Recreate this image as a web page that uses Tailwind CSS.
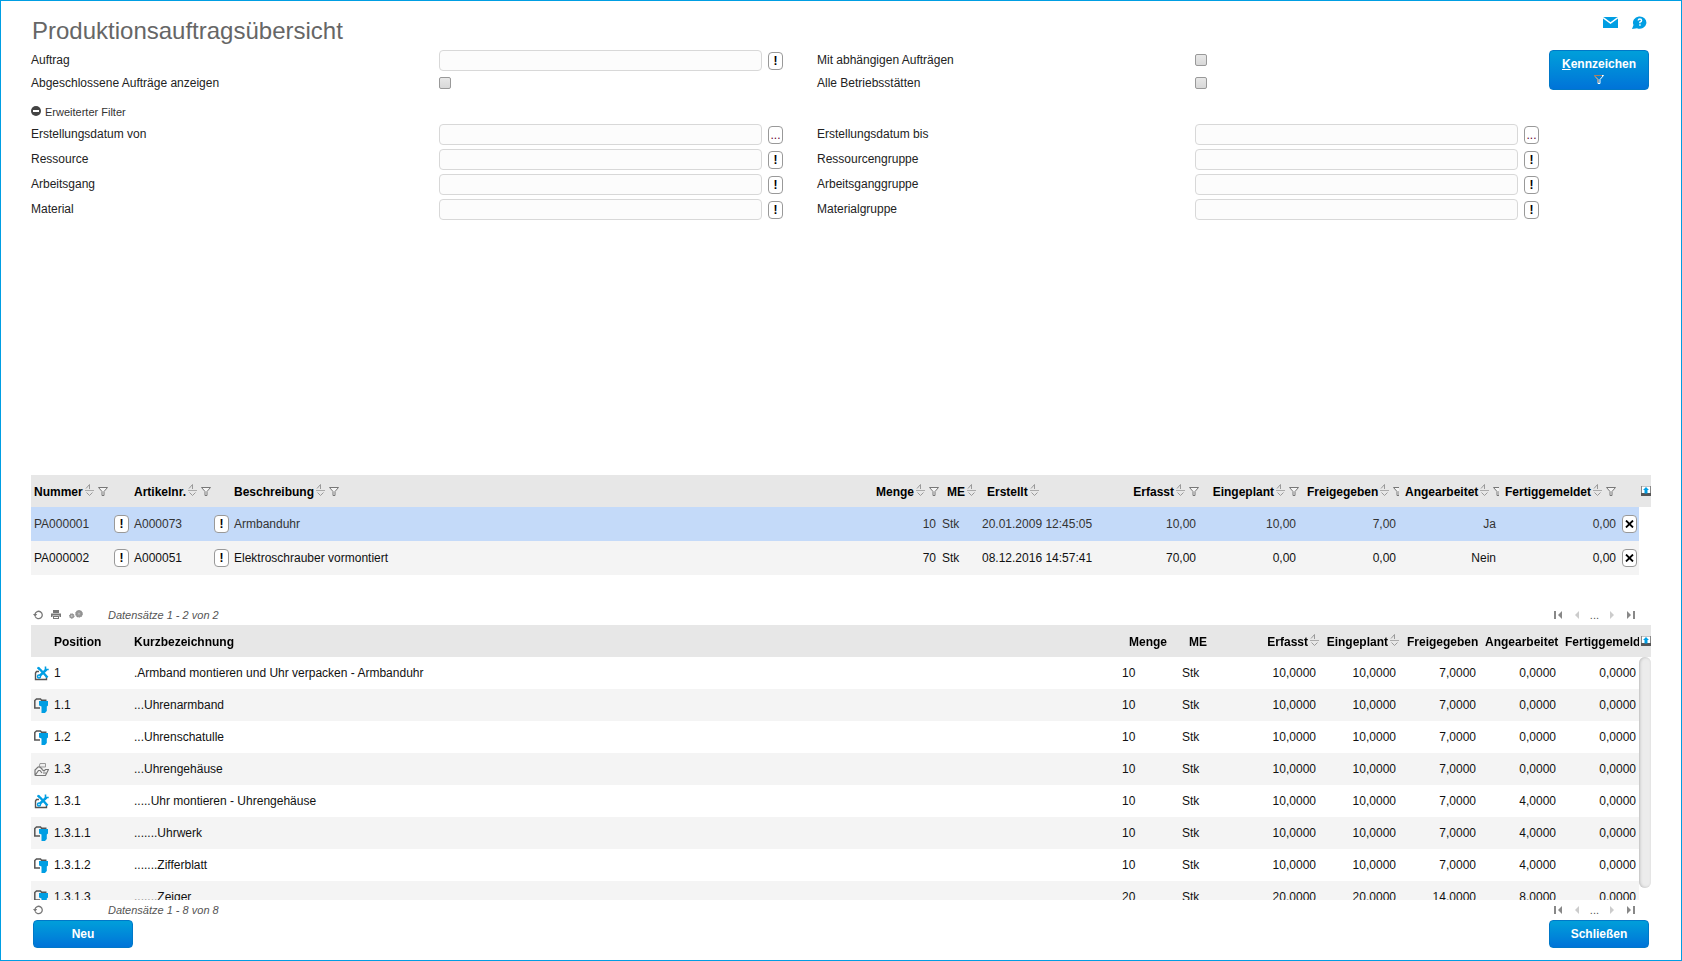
<!DOCTYPE html>
<html lang="de">
  <head>
    <meta charset="UTF-8" />
    <meta name="viewport" content="width=device-width, initial-scale=1.0" />
    <title>Produktionsauftragsübersicht</title>
    <script src="https://cdn.jsdelivr.net/npm/@tailwindcss/browser@4"></script>
  </head>
  <body class="font-['Liberation_Sans',Arial,sans-serif] text-[12px] leading-4 text-[#222] bg-white">
    <!-- icon set -->
    <svg class="hidden">
      <symbol id="sort" viewBox="0 0 9 12">
        <path d="M0 6.500h9" stroke="#aaa" />
        <path d="M1 4.500 4.500 .5V5M1.500 8.500 4.500 11.500 7.500 8.500" fill="none" stroke="#999" />
      </symbol>
      <symbol id="funnel" viewBox="0 0 10 9">
        <path d="M.5.5h9L6 4.500V8.500H4V4.500z" fill="#f4f4f4" stroke="#777" />
      </symbol>
      <symbol id="export" viewBox="0 0 10 11">
        <path d="M.5 0h9v8h-9z" fill="#fff" stroke="#888" />
        <path d="M0 7h10v3H0z" fill="#555" />
        <path d="M5 1 8 4H6.500V7.500h-3V4H2z" fill="#009ee3" />
      </symbol>
      <symbol id="refresh" viewBox="0 0 10 10">
        <path d="M2.200 6.500A3.700 3.700 0 1 0 2 4" fill="none" stroke="#777" stroke-width="1.300" />
        <path d="M0 4h4.200L2.100 6.800z" fill="#777" />
      </symbol>
      <symbol id="printer" viewBox="0 0 10 9">
        <path d="M2 0h6v3H2zM0 3.500h10V7H8.500V5.500h-7V7H0zM2 6h6v3H2z" fill="#777" />
        <path d="M3 7h4v1H3z" fill="#fff" />
      </symbol>
      <symbol id="gears" viewBox="0 0 14 9">
        <circle cx="2.800" cy="6" r="2.300" fill="#999" stroke="#888" stroke-dasharray="1 .6" />
        <circle cx="10" cy="3.800" r="3.200" fill="#999" stroke="#888" stroke-width="1.200" stroke-dasharray="1.400 .6" />
        <circle cx="2.800" cy="6" r=".8" fill="#ddd" />
        <circle cx="10" cy="3.800" r="1" fill="#bbb" />
      </symbol>
      <symbol id="cross" viewBox="0 0 9 8">
        <path d="M1 .5 8 7.500M8 .5 1 7.500" stroke="#000" stroke-width="1.800" />
      </symbol>
      <symbol id="montage" viewBox="0 0 15 15">
        <path d="M5 5.500H2.500L1.500 7v6.500h11V10" fill="none" stroke="#555" stroke-width="1.400" />
        <path d="M4 1.500 9.500 7l4 4.500M12.500 3.500 6 9.500" stroke="#009ee3" stroke-width="2.400" fill="none" />
        <path d="M3.500 1.500 5.500 3M11.500 .5v3h3.200" fill="none" stroke="#009ee3" stroke-width="1.600" />
        <circle cx="5" cy="10.500" r="1.500" fill="#fff" stroke="#009ee3" stroke-width="1.500" />
      </symbol>
      <symbol id="material" viewBox="0 0 15 15">
        <path d="M6 10H.8V2.500L2.500 1h4l1 1.200h5" fill="none" stroke="#555" stroke-width="1.500" />
        <path d="M5 3h9v4.500L12.800 8.500V13L11 15H7.500V8.500L5 7.500z" fill="#009ee3" />
      </symbol>
      <symbol id="baugruppe" viewBox="0 0 15 15">
        <path d="M6 1.500h5.500v3.500H5z" fill="#eee" stroke="#999" />
        <path d="M1 13.500V8l3-3h2l2.500 2.500M1 13.500 4.500 8.500H6l2 2.500M1 13.500h10.500L14.500 7.500h-3L10 9 8 7.500" fill="none" stroke="#777" stroke-width="1.200" />
        <path d="M9 11h3" stroke="#777" />
      </symbol>
      <symbol id="first" viewBox="0 0 9 8">
        <path d="M0 0h2v8H0zM8 0v8L4 4z" />
      </symbol>
      <symbol id="prev" viewBox="0 0 9 8">
        <path d="M7 0v8L3 4z" />
      </symbol>
    </svg>

    <div class="h-screen flex flex-col border border-[#009ee3] px-[30px] pt-[11px] pb-3">
      <header class="flex justify-between items-start">
        <h1 class="pl-px text-[24px] leading-[38px] text-[#666]">Produktionsauftragsübersicht</h1>
        <nav class="flex gap-[14px] pt-1 pr-1">
          <a href="#" aria-label="Nachricht">
            <svg class="w-[15px] h-[13px]" viewBox="0 0 15 13">
              <path d="M0 1h15v11H0z" fill="#009ee3" />
              <path d="M0 1.500l7.500 5.500L15 1.500" fill="none" stroke="#fff" stroke-width="1.500" />
            </svg>
          </a>
          <a href="#" aria-label="Hilfe">
            <svg class="w-[15px] h-[13px]" viewBox="0 0 15 13">
              <path d="M0 13 1.500 9A6.700 6.200 0 1 1 5 12.300z" fill="#009ee3" />
              <path d="M6.200 4.500q0-1.500 1.700-1.500t1.700 1.400Q9.600 5.500 7.900 6.200v1" fill="none" stroke="#fff" stroke-width="1.400" />
              <path d="M7.200 8.200h1.500v1.500H7.200z" fill="#fff" />
            </svg>
          </a>
        </nav>
      </header>

      <main class="flex-1 min-h-0 flex flex-col">
        <section class="flex-1 min-h-0 flex items-start gap-[10px] pr-0.5">
          <form class="flex-1">
            <div class="filter grid grid-cols-[408fr_344fr_412fr_344fr] auto-rows-[21px] gap-y-0.5 items-start"></div>
            <button type="button" class="mt-2 mb-0.5 h-5 flex items-center gap-1 text-[11px] text-[#333]">
              <svg class="w-[10px] h-[10px] mb-0.5" viewBox="0 0 10 10">
                <circle cx="5" cy="5" r="5" fill="#444" />
                <path d="M2 4h6v2H2z" fill="#fff" />
              </svg>
              Erweiterter Filter
            </button>
            <div class="filter grid grid-cols-[408fr_344fr_412fr_344fr] auto-rows-[21px] gap-y-1 items-start"></div>
          </form>
          <button class="w-[100px] h-10 rounded border border-[#0078c8] bg-linear-to-b from-[#009fda] to-[#0073d8] text-white font-bold flex flex-col items-center justify-center">
            <span class="leading-[14px]"><u>K</u>ennzeichen</span>
            <svg class="w-[10px] h-[9px] mt-1" viewBox="0 0 10 9">
              <path d="M.5.500h9L6 4.500V8.500H4V4.500z" fill="none" stroke="#fff" />
              <path d="M0 .5h8M1 1l3 3.500v3" stroke="#a87f5f" fill="none" />
            </svg>
          </button>
        </section>

        <table class="w-full table-fixed">
          <colgroup>
            <col class="w-[100px]" />
            <col class="w-[100px]" />
            <col />
            <col class="w-[70px]" />
            <col class="w-[40px]" />
            <col class="w-[140px]" />
            <col class="w-[80px]" />
            <col class="w-[100px]" />
            <col class="w-[100px]" />
            <col class="w-[100px]" />
            <col class="w-[120px]" />
            <col class="w-[20px]" />
            <col class="w-[12px]" />
          </colgroup>
          <thead>
            <tr id="orderHead" class="h-8 bg-[#e7e7e7] text-black text-left whitespace-nowrap"></tr>
          </thead>
          <tbody id="orders"></tbody>
        </table>
        <div class="pager mt-[29px] h-[21px] flex items-center justify-between" data-info="Datensätze 1 - 2 von 2" data-tools="all"></div>

        <div class="relative">
          <div class="h-[275px] overflow-y-auto [scrollbar-width:none]">
            <table class="w-full table-fixed">
              <colgroup>
                <col class="w-[20px]" />
                <col class="w-[80px]" />
                <col />
                <col class="w-[60px]" />
                <col class="w-[60px]" />
                <col class="w-[80px]" />
                <col class="w-[80px]" />
                <col class="w-[80px]" />
                <col class="w-[80px]" />
                <col class="w-[80px]" />
                <col class="w-[12px]" />
              </colgroup>
              <thead class="sticky top-0">
                <tr id="posHead" class="h-8 bg-[#e7e7e7] text-black text-left whitespace-nowrap"></tr>
              </thead>
              <tbody id="positions"></tbody>
            </table>
          </div>
          <!-- scroll thumb -->
          <div class="absolute right-0 top-8 bottom-3 w-3 rounded-full bg-[#ececec] shadow-[inset_1px_0_3px_#bbb]"></div>
        </div>
        <div class="pager h-5 flex items-center justify-between" data-info="Datensätze 1 - 8 von 8"></div>
      </main>

      <footer class="flex justify-between px-0.5">
        <button class="w-[100px] h-7 rounded border border-[#0078c8] bg-linear-to-b from-[#009fda] to-[#0073d8] text-white font-bold">Neu</button>
        <button class="w-[100px] h-7 rounded border border-[#0078c8] bg-linear-to-b from-[#009fda] to-[#0073d8] text-white font-bold">Schließen</button>
      </footer>
    </div>

    <script>
      const sort = `<svg class="inline-block w-[9px] h-3 ml-0.5 mb-1"><use href="#sort" /></svg>`;
      const funnel = `<svg class="inline-block w-[10px] h-[9px] ml-1 mb-0.5"><use href="#funnel" /></svg>`;
      const exportIcon = `<svg class="block w-[10px] h-[11px] ml-0.5 mb-0.5"><use href="#export" /></svg>`;

      function smallButton(text, label) {
        return `<button type="button" aria-label="${label}" class="w-[15px] h-[18px] shrink-0 flex items-center justify-center rounded border border-[#999] bg-white text-[12px] leading-3 font-bold text-black">${text}</button>`;
      }

      // filter fields: [label, kind]
      const filters = [
        [
          ["Auftrag", "!"],
          ["Mit abhängigen Aufträgen", "check"],
          ["Abgeschlossene Aufträge anzeigen", "check"],
          ["Alle Betriebsstätten", "check"],
        ],
        [
          ["Erstellungsdatum von", "..."],
          ["Erstellungsdatum bis", "..."],
          ["Ressource", "!"],
          ["Ressourcengruppe", "!"],
          ["Arbeitsgang", "!"],
          ["Arbeitsganggruppe", "!"],
          ["Material", "!"],
          ["Materialgruppe", "!"],
        ],
      ];

      document.querySelectorAll(".filter").forEach((el, n) => {
        el.innerHTML = filters[n]
          .map(([label, kind], i) => {
            const id = `f${n}${i}`;
            const field =
              kind == "check"
                ? `<input id="${id}" type="checkbox" class="block appearance-none w-3 h-3 mt-1 rounded-xs border border-[#999] bg-linear-to-b from-[#e8e8e8] to-[#d8d8d8]" />`
                : `<div class="flex items-center gap-1.5">
                    <input id="${id}" type="text" class="flex-1 min-w-0 h-[21px] px-1 rounded border border-[#d8d8d8] bg-[#fcfcfc]" />
                    ${smallButton(kind == "!" ? "!" : `<span class="font-normal text-[#603]">...</span>`, "Auswahl")}
                  </div>`;
            return `<label for="${id}" class="leading-5 ${i % 2 ? "pl-[34px]" : ""}">${label}</label>${field}`;
          })
          .join("");
      });

      // header cells: [text, icons, classes]
      const orderHead = [
        ["Nummer", sort + funnel, "pl-[3px]"],
        ["Artikelnr.", sort + funnel, "pl-[3px]"],
        ["Beschreibung", sort + funnel, "pl-[3px]"],
        ["Menge", sort + funnel, "text-right"],
        ["ME", sort, "pl-2"],
        ["Erstellt", sort, "pl-2"],
        ["Erfasst", sort + funnel, "text-right"],
        ["Eingeplant", sort + funnel, "text-right"],
        ["Freigegeben", sort + funnel, "pl-2"],
        ["Angearbeitet", sort + funnel, "pl-1.5"],
        ["Fertiggemeldet", sort + funnel, "pl-1.5"],
        ["", "", ""],
        ["", exportIcon, ""],
      ];
      const posHead = [
        ["", "", ""],
        ["Position", "", "pl-[3px]"],
        ["Kurzbezeichnung", "", "pl-[3px]"],
        ["Menge", "", "pl-[10px]"],
        ["ME", "", "pl-[10px]"],
        ["Erfasst", sort, "text-right"],
        ["Eingeplant", sort, "text-right"],
        ["Freigegeben", "", "pl-2"],
        ["Angearbeitet", "", "pl-1.5"],
        ["Fertiggemeldet", "", "pl-1.5"],
        ["", exportIcon, ""],
      ];
      function head(cells) {
        return cells.map(([text, icons, cls]) => `<th class="pt-0.5 overflow-hidden ${cls}">${text}${icons}</th>`).join("");
      }
      document.getElementById("orderHead").innerHTML = head(orderHead);
      document.getElementById("posHead").innerHTML = head(posHead);

      const orders = [
        ["PA000001", "A000073", "Armbanduhr", "10", "Stk", "20.01.2009 12:45:05", "10,00", "10,00", "7,00", "Ja", "0,00"],
        ["PA000002", "A000051", "Elektroschrauber vormontiert", "70", "Stk", "08.12.2016 14:57:41", "70,00", "0,00", "0,00", "Nein", "0,00"],
      ];
      document.getElementById("orders").innerHTML = orders
        .map((o, n) => {
          const cells = o.map((v, i) => {
            if (i < 2) {
              return `<td class="pl-[3px] pr-0.5"><div class="flex items-center justify-between">${v}${smallButton("!", "Details")}</div></td>`;
            }
            const right = i == 3 || i > 5;
            return `<td class="px-[3px] whitespace-nowrap ${right ? "text-right" : ""}">${v}</td>`;
          });
          const del = smallButton(`<svg class="w-[9px] h-2"><use href="#cross" /></svg>`, "Löschen");
          return `<tr class="h-[34px] ${n ? "bg-[#f4f4f4] text-[#111]" : "bg-[#c4daf9] text-[#333]"}">${cells.join("")}<td class="pl-[3px]">${del}</td><td class="bg-white"></td></tr>`;
        })
        .join("");

      const positions = [
        ["montage", "1", ".Armband montieren und Uhr verpacken - Armbanduhr", "10", "Stk", "10,0000", "10,0000", "7,0000", "0,0000", "0,0000"],
        ["material", "1.1", "...Uhrenarmband", "10", "Stk", "10,0000", "10,0000", "7,0000", "0,0000", "0,0000"],
        ["material", "1.2", "...Uhrenschatulle", "10", "Stk", "10,0000", "10,0000", "7,0000", "0,0000", "0,0000"],
        ["baugruppe", "1.3", "...Uhrengehäuse", "10", "Stk", "10,0000", "10,0000", "7,0000", "0,0000", "0,0000"],
        ["montage", "1.3.1", ".....Uhr montieren - Uhrengehäuse", "10", "Stk", "10,0000", "10,0000", "7,0000", "4,0000", "0,0000"],
        ["material", "1.3.1.1", ".......Uhrwerk", "10", "Stk", "10,0000", "10,0000", "7,0000", "4,0000", "0,0000"],
        ["material", "1.3.1.2", ".......Zifferblatt", "10", "Stk", "10,0000", "10,0000", "7,0000", "4,0000", "0,0000"],
        ["material", "1.3.1.3", ".......Zeiger", "20", "Stk", "20,0000", "20,0000", "14,0000", "8,0000", "0,0000"],
      ];
      document.getElementById("positions").innerHTML = positions
        .map(([icon, ...vals]) => {
          const cells = vals.map((v, i) => `<td class="px-[3px] whitespace-nowrap ${i > 3 ? "text-right" : ""}">${v}</td>`);
          return `<tr class="h-8 even:bg-[#f4f4f4] text-[#111]"><td class="pl-[3px]"><svg class="block w-[15px] h-[15px]"><use href="#${icon}" /></svg></td>${cells.join("")}<td class="bg-white"></td></tr>`;
        })
        .join("");

      document.querySelectorAll(".pager").forEach((el) => {
        const extra = el.dataset.tools
          ? `<button aria-label="Drucken"><svg class="w-[10px] h-[9px]"><use href="#printer" /></svg></button>
             <button aria-label="Einstellungen"><svg class="w-[14px] h-[9px]"><use href="#gears" /></svg></button>`
          : "";
        el.innerHTML = `
          <div class="flex items-center pl-0.5">
            <div class="w-[75px] flex items-center gap-2">
              <button aria-label="Aktualisieren"><svg class="w-[10px] h-[10px]"><use href="#refresh" /></svg></button>${extra}
            </div>
            <span class="text-[11px] italic text-[#555]">${el.dataset.info}</span>
          </div>
          <div class="flex items-center gap-[9px] pr-4">
            <button aria-label="Erste Seite"><svg class="w-[9px] h-2 fill-[#888]"><use href="#first" /></svg></button>
            <button aria-label="Vorherige Seite"><svg class="w-[9px] h-2 fill-[#ccc]"><use href="#prev" /></svg></button>
            <span class="text-[11px] text-[#555]">...</span>
            <button aria-label="Nächste Seite"><svg class="w-[9px] h-2 fill-[#ccc] rotate-180"><use href="#prev" /></svg></button>
            <button aria-label="Letzte Seite"><svg class="w-[9px] h-2 fill-[#888] rotate-180"><use href="#first" /></svg></button>
          </div>`;
      });
    </script>
  </body>
</html>
